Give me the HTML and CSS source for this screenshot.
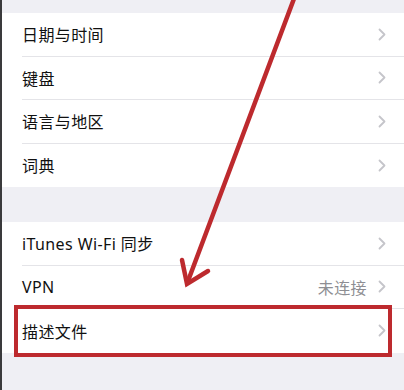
FILE: index.html
```html
<!DOCTYPE html>
<html lang="zh-CN">
<head>
  <meta charset="UTF-8">
  <meta name="viewport" content="width=device-width, initial-scale=1.0">
  <title>通用</title>
  <link rel="stylesheet" href="styles.css">
</head>
<body>
  <div class="screen">
    <div class="group">
      <div class="row"><div class="cell"><span class="label">日期与时间</span><span class="chev"><svg width="8" height="13" viewBox="0 0 8 13"><polyline points="1.5,1.5 6.5,6.5 1.5,11.5"/></svg></span></div></div>
      <div class="row"><div class="cell"><span class="label">键盘</span><span class="chev"><svg width="8" height="13" viewBox="0 0 8 13"><polyline points="1.5,1.5 6.5,6.5 1.5,11.5"/></svg></span></div></div>
      <div class="row"><div class="cell"><span class="label">语言与地区</span><span class="chev"><svg width="8" height="13" viewBox="0 0 8 13"><polyline points="1.5,1.5 6.5,6.5 1.5,11.5"/></svg></span></div></div>
      <div class="row"><div class="cell last"><span class="label">词典</span><span class="chev"><svg width="8" height="13" viewBox="0 0 8 13"><polyline points="1.5,1.5 6.5,6.5 1.5,11.5"/></svg></span></div></div>
    </div>

    <div class="group second">
      <div class="row"><div class="cell"><span class="label">iTunes Wi-Fi 同步</span><span class="chev"><svg width="8" height="13" viewBox="0 0 8 13"><polyline points="1.5,1.5 6.5,6.5 1.5,11.5"/></svg></span></div></div>
      <div class="row"><div class="cell"><span class="label">VPN</span><span class="value">未连接</span><span class="chev"><svg width="8" height="13" viewBox="0 0 8 13"><polyline points="1.5,1.5 6.5,6.5 1.5,11.5"/></svg></span></div></div>
      <div class="row"><div class="cell last"><span class="label">描述文件</span><span class="chev"><svg width="8" height="13" viewBox="0 0 8 13"><polyline points="1.5,1.5 6.5,6.5 1.5,11.5"/></svg></span></div></div>
    </div>

    <!-- annotation drawn over the list -->
    <div class="highlight"></div>
    <svg class="arrow" width="404" height="390" viewBox="0 0 404 390">
      <line x1="293" y1="-4" x2="186" y2="281"/>
      <polyline points="180,260 185,284 206,271"/>
    </svg>
  </div>
</body>
</html>
```

FILE: styles.css
```css
html, body {
  margin: 0;
  padding: 0;
  background: #efeff4;
  font-family: "Noto Sans", "Noto Sans CJK SC", sans-serif;
}
.screen {
  position: relative;
  width: 404px;
  height: 390px;
  overflow: hidden;
  box-sizing: border-box;
  border-left: 2px solid #3a3a3c;
  padding-top: 13px;
}
.group {
  background: #fff;
}
.group.second {
  margin-top: 35px;
}
.row {
  height: 43.5px;
  padding-left: 20px;
}
.cell {
  height: 100%;
  display: flex;
  align-items: center;
  border-bottom: 1px solid #e4e4e8;
  box-sizing: border-box;
  padding-right: 18px;
}
.cell.last {
  border-bottom: none;
}
.label {
  flex: 1;
  font-size: 16px;
  color: #111;
  letter-spacing: 0.4px;
}
.value {
  font-size: 16px;
  color: #8e8e93;
  margin-right: 11px;
  letter-spacing: 0.4px;
}
.chev {
  display: flex;
}
.chev polyline {
  fill: none;
  stroke: #c5c5ca;
  stroke-width: 1.8;
  stroke-linecap: round;
  stroke-linejoin: round;
}
.highlight {
  position: absolute;
  left: 12px;
  top: 305px;
  width: 378px;
  height: 52px;
  box-sizing: border-box;
  border: 4px solid #bd2a2e;
}
.arrow {
  position: absolute;
  left: 0;
  top: 0;
}
.arrow line, .arrow polyline {
  fill: none;
  stroke: #bd2a2e;
  stroke-width: 4.5;
  stroke-linecap: round;
  stroke-linejoin: miter;
}
```
